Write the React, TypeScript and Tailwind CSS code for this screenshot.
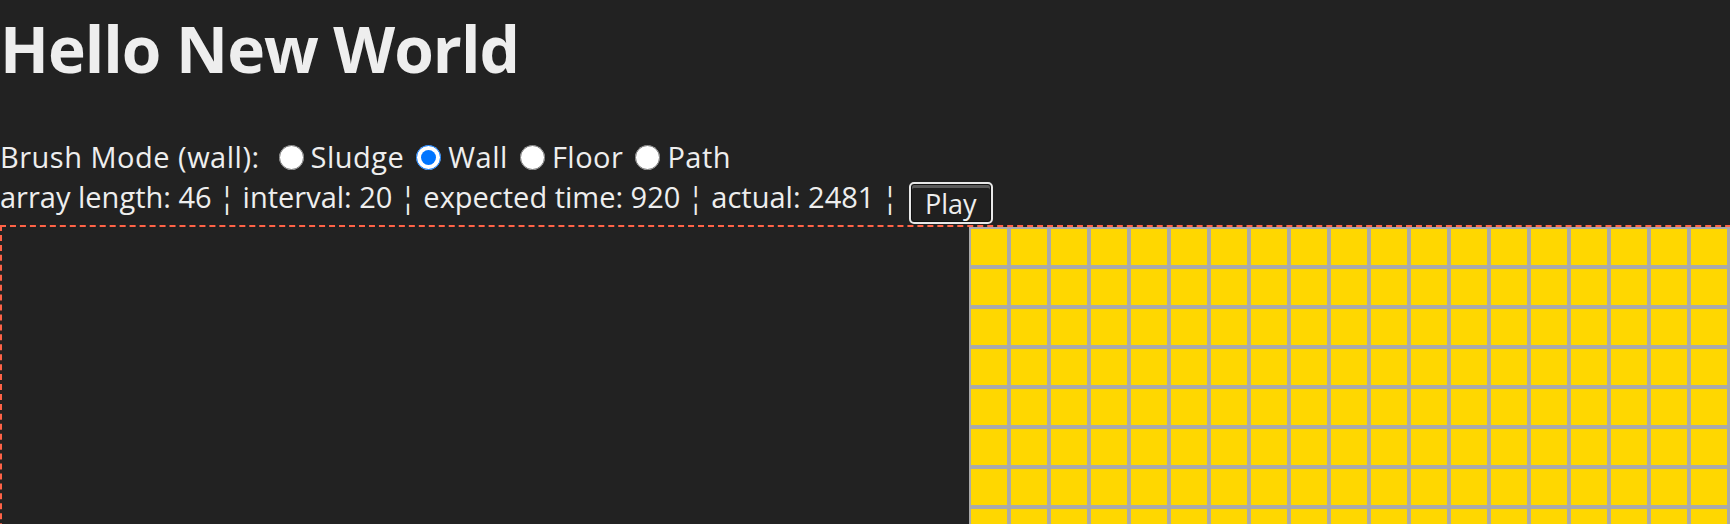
import { useState } from "react";

const modes = ["Sludge", "Wall", "Floor", "Path"];

const COLS = 20;
const ROWS = 8;

export default function App() {
  const [mode, setMode] = useState("Wall");

  const cells = Array.from({ length: COLS * ROWS }, (_, i) => i);

  return (
    <div
      className="h-screen overflow-hidden bg-[#222222] text-[#eeeeee]"
      style={{ fontFamily: '"Open Sans", "Noto Sans", sans-serif' }}
    >
      <h1 className="m-0 text-[64px] font-bold leading-[98px] tracking-[-1px]">
        Hello New World
      </h1>

      <div className="mt-[39px] flex h-[40px] items-center text-[29px] leading-[40px] tracking-[0.5px]">
        <span className="whitespace-pre">Brush Mode (wall):</span>
        {modes.map((m, idx) => (
          <label key={m} className="flex items-center">
            <input
              type="radio"
              name="brush"
              checked={mode === m}
              onChange={() => setMode(m)}
              className={`m-0 h-[25px] w-[25px] mr-[7px] ${idx === 0 ? "ml-[19px]" : "ml-[12px]"}`}
            />
            <span>{m}</span>
          </label>
        ))}
      </div>

      <div className="flex h-[48px] items-start text-[29px] leading-[40px]">
        <span className="whitespace-pre">
          array length: 46 ¦ interval: 20 ¦ expected time: 920 ¦ actual: 2481 ¦
        </span>
        <button className="ml-[11px] mt-[5px] h-[42px] w-[84px] rounded-[5px] border-2 border-[#e8e8e8] bg-[#202020] text-[27px] leading-none text-[#eeeeee] shadow-[inset_0_0_0_1px_#111111,inset_0_3px_0_1px_#5a5a5a]">
          Play
        </button>
      </div>

      <div className="w-max border-2 border-dashed border-[#ff6347]">
        <div className="ml-[967px] grid grid-cols-[repeat(20,40px)]">
          {cells.map((c) => (
            <div
              key={c}
              className="h-10 w-10 border-2 border-[#aaaaaa] bg-[#ffd700]"
            />
          ))}
        </div>
      </div>
    </div>
  );
}
